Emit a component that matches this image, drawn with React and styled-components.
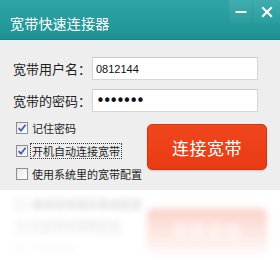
import styled, { createGlobalStyle } from 'styled-components';

const GlobalStyle = createGlobalStyle`
html, body {
    margin: 0;
    padding: 0;
    background: #ffffff;
}
body {
    font-family: "Noto Sans CJK SC", "Noto Sans", "Liberation Sans", sans-serif;
}
`

function Check() {
    return (
        <svg width="10" height="10" viewBox="0 0 10 10">
            <path d="M1.6 5.2 L4 7.6 L8.6 1.8" fill="none" stroke="#3d5cb8" strokeWidth="1.7" />
        </svg>
    );
}

function LowerPanel({ mirror }) {
    return (
        <Lower aria-hidden={mirror ? 'true' : undefined}>
            <Options>
                <Option>
                    <Box><Check /></Box>
                    <OptionText>记住密码</OptionText>
                </Option>
                <Option>
                    <Box><Check /></Box>
                    <OptionText focused>开机自动连接宽带</OptionText>
                </Option>
                <Option>
                    <Box />
                    <OptionText>使用系统里的宽带配置</OptionText>
                </Option>
            </Options>
            <ConnectButton tabIndex={mirror ? -1 : 0}>连接宽带</ConnectButton>
        </Lower>
    );
}

function App() {
    return (
        <Container>
            <GlobalStyle />
            <TitleBar>
                <Title>宽带快速连接器</Title>
                <WinButtons>
                    <WinButton aria-label="最小化">
                        <svg width="12" height="12" viewBox="0 0 12 12">
                            <path d="M0.5 6 H11.5" stroke="#ffffff" strokeWidth="2" />
                        </svg>
                    </WinButton>
                    <WinButton aria-label="关闭" wide>
                        <svg width="12" height="12" viewBox="0 0 12 12">
                            <path d="M1.2 1.2 L10.8 10.8 M10.8 1.2 L1.2 10.8" stroke="#ffffff" strokeWidth="2" />
                        </svg>
                    </WinButton>
                </WinButtons>
            </TitleBar>

            <Body>
                <Field>
                    <Label>宽带用户名：</Label>
                    <Input type="text" defaultValue="0812144" />
                </Field>
                <Field>
                    <Label>宽带的密码：</Label>
                    <Input type="password" defaultValue="1234567" secret />
                </Field>
                <LowerPanel />
            </Body>

            {/* blurred reflection of the lower half under the window */}
            <Reflection>
                <Mirror>
                    <LowerPanel mirror />
                </Mirror>
            </Reflection>
        </Container>
    );
}

export default App;

const Container = styled.div`
width: 280px;
height: 270px;
overflow: hidden;
display: flex;
flex-direction: column;
`

const TitleBar = styled.div`
height: 40px;
flex-shrink: 0;
box-sizing: border-box;
display: flex;
justify-content: space-between;
align-items: flex-start;
background: linear-gradient(to bottom, #2da4a8 0%, #259a9c 60%, #1f9092 100%);
border-bottom: 1px solid #1a8284;
`

const Title = styled.div`
padding: 15px 0 0 10px;
color: #ffffff;
font-size: 14px;
line-height: 17px;
letter-spacing: 0.2px;
`

const WinButtons = styled.div`
display: flex;
height: 23px;
`

const WinButton = styled.div`
width: ${props => props.wide ? '28px' : '24px'};
height: 23px;
display: flex;
align-items: center;
justify-content: center;
background: linear-gradient(to bottom, rgba(255,255,255,0.09), rgba(255,255,255,0.03));
border-left: 1px solid rgba(0,0,0,0.07);
box-sizing: border-box;
`

const Body = styled.div`
height: 150px;
flex-shrink: 0;
box-sizing: border-box;
padding: 17px 13px 0 13px;
background: #eeeeee;
display: flex;
flex-direction: column;
gap: 9px;
color: #1e1e1e;
`

const Field = styled.div`
display: flex;
align-items: center;
margin-right: 9px;
`

const Label = styled.div`
width: 79px;
flex-shrink: 0;
font-size: 13px;
line-height: 16px;
white-space: nowrap;
`

const Input = styled.input`
flex: 1;
min-width: 0;
height: 23px;
box-sizing: border-box;
margin: 0;
padding: 0 3px;
border: 1px solid #d6d6d6;
border-top-color: #cacaca;
background: #ffffff;
outline: none;
font-family: ${props => props.secret ? '"DejaVu Sans", sans-serif' : '"Liberation Sans", sans-serif'};
font-size: ${props => props.secret ? '15px' : '11px'};
letter-spacing: ${props => props.secret ? '-2.2px' : '0'};
color: #111111;
`

const Lower = styled.div`
display: flex;
justify-content: space-between;
align-items: flex-start;
margin-top: -1px;
color: #1e1e1e;
`

const Options = styled.div`
display: flex;
flex-direction: column;
gap: 7px;
padding-left: 3px;
`

const Option = styled.div`
display: flex;
align-items: center;
height: 16px;
gap: 3px;
`

const Box = styled.span`
width: 12px;
height: 12px;
box-sizing: border-box;
border: 1px solid #8e8e8e;
background: linear-gradient(135deg, #e6e6e6, #ffffff);
display: flex;
align-items: center;
justify-content: center;
`

const OptionText = styled.span`
font-size: 11px;
line-height: 14px;
white-space: nowrap;
padding: 0 1px;
outline: ${props => props.focused ? '1px dotted #333' : 'none'};
`

const ConnectButton = styled.div`
width: 120px;
height: 46px;
margin-top: 4px;
box-sizing: border-box;
display: flex;
align-items: center;
justify-content: center;
border: 1px solid #cf3511;
border-radius: 5px;
background: linear-gradient(to bottom, #f0461d 0%, #e93b13 100%);
box-shadow: 0 1px 2px rgba(0,0,0,0.15);
color: #ffffff;
font-size: 17px;
letter-spacing: 0.5px;
cursor: pointer;
`

const Reflection = styled.div`
height: 80px;
flex-shrink: 0;
overflow: hidden;
background: #ffffff;
opacity: 0.3;
filter: blur(3px);
-webkit-mask-image: linear-gradient(to bottom, #000 0%, rgba(0,0,0,0.45) 50%, transparent 90%);
mask-image: linear-gradient(to bottom, #000 0%, rgba(0,0,0,0.45) 50%, transparent 90%);
pointer-events: none;
`

const Mirror = styled.div`
padding: 0 13px 8px 13px;
transform: scaleY(-1);
`
